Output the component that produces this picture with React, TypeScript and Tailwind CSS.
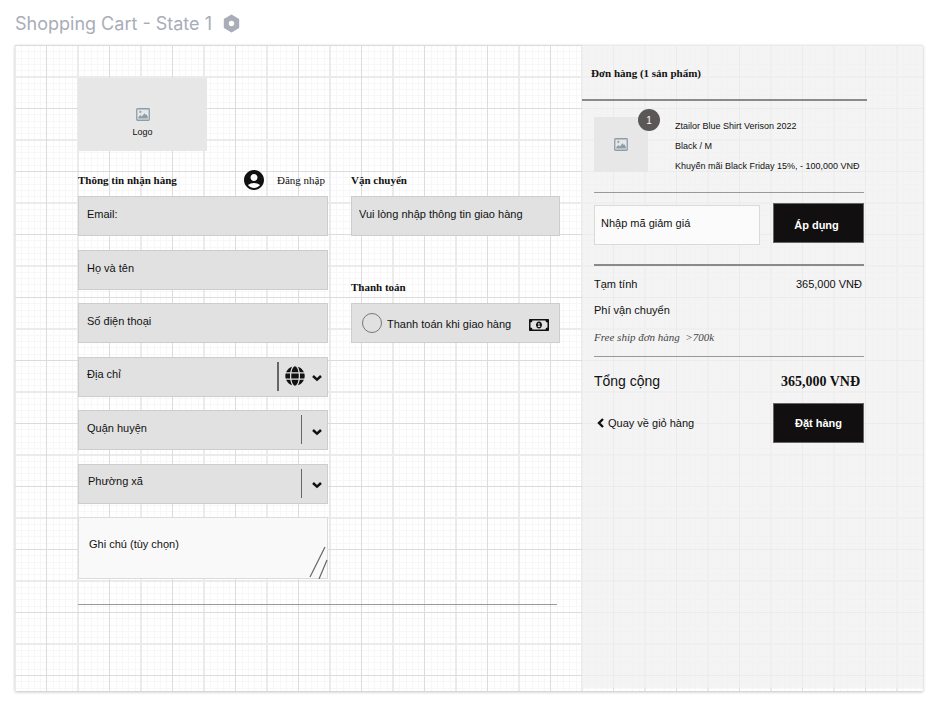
import React from "react";
import { FaGlobe, FaRegMoneyBillAlt } from "react-icons/fa";
import { MdAccountCircle } from "react-icons/md";

const SANS = "font-['Liberation_Sans',Arial,sans-serif]";
const SERIF = "font-['Liberation_Serif','Times_New_Roman',serif]";
const FIELD =
  "block h-10 w-full rounded-none border border-[#cdcdcd] bg-[#e1e1e1] pb-1 text-[11px] text-[#111] placeholder:text-[#111] placeholder:opacity-100 outline-none";

function GridPaper() {
  return (
    <svg className="absolute inset-0 h-full w-full" aria-hidden="true">
      <defs>
        <pattern id="grid" width="63" height="63" patternUnits="userSpaceOnUse" shapeRendering="crispEdges">
          <path
            d="M6 0h1v63h-1zM13 0h1v63h-1zM19 0h1v63h-1zM25 0h1v63h-1zM38 0h1v63h-1zM44 0h1v63h-1zM50 0h1v63h-1zM57 0h1v63h-1zM0 6h63v1h-63zM0 13h63v1h-63zM0 19h63v1h-63zM0 25h63v1h-63zM0 38h63v1h-63zM0 44h63v1h-63zM0 50h63v1h-63zM0 57h63v1h-63z"
            fill="#f7f7f7"
          />
          <path d="M0 0h1v63h-1zM62 0h1v63h-1zM0 31h63v2h-63z" fill="#ebebeb" />
          <path d="M31 0h1v63h-1zM0 0h63v1h-63z" fill="#dcdcdc" />
        </pattern>
      </defs>
      <rect width="100%" height="100%" fill="url(#grid)" />
    </svg>
  );
}

function ImageIcon() {
  return (
    <svg width="14" height="13" viewBox="0 0 14 13" aria-hidden="true">
      <rect x="0.75" y="0.75" width="12.5" height="11.5" rx="0.8" fill="none" stroke="#8d9da8" strokeWidth="1.3" />
      <path d="M2.3 10.6V9.200l2-2.200 1.500 1.500L8.600 5.200l1.200 1.700.6-.6 1.400 2.400v1.900z" fill="#8d9da8" />
      <path d="M4.300 2.700v2.400M3.100 3.900h2.400" stroke="#8d9da8" strokeWidth="0.9" />
    </svg>
  );
}

function ChevronDown() {
  return (
    <svg width="10" height="8" viewBox="0 0 10 8" fill="none" aria-hidden="true">
      <path d="M1 2l4 3.600L9 2" stroke="#111" strokeWidth="2.500" />
    </svg>
  );
}

function SelectField({ label, globe = false, indent = false }: { label: string; globe?: boolean; indent?: boolean }) {
  return (
    <div className="relative">
      <select
        aria-label={label}
        className={`${FIELD} appearance-none ${indent ? "pl-[9px]" : "pl-2"}`}
      >
        <option>{label}</option>
      </select>
      <div className="pointer-events-none absolute inset-y-0 right-[6px] flex items-center pb-px">
        <span className={`h-[29px] bg-[#666] ${globe ? "mr-[6px] w-[2px]" : "mr-[10px] w-px"}`} />
        {globe && <FaGlobe className="mr-[7px] text-[20px] text-[#111]" />}
        <span className="pt-1">
          <ChevronDown />
        </span>
      </div>
    </div>
  );
}

export default function App() {
  return (
    <div className={`min-h-screen bg-white pr-[13px] pb-[11px] pl-[15px] text-[11px] text-[#111] ${SANS}`}>
      <header className="flex h-[45px] items-center gap-[11px] pt-0.5 text-[#a8adb8]">
        <h1 className="font-['Inter',sans-serif] text-[18px] leading-6">Shopping Cart - State 1</h1>
        <svg width="17" height="19" viewBox="0 0 17 19" aria-hidden="true">
          <path
            d="M8.500 1.500l6.700 4v8l-6.700 4-6.700-4v-8z"
            fill="#a8adb8"
            stroke="#a8adb8"
            strokeWidth="2"
            strokeLinejoin="round"
          />
          <circle cx="8.500" cy="9.500" r="2.700" fill="#fff" />
        </svg>
      </header>

      <div className="relative grid min-h-[calc(100vh-56px)] grid-cols-[567fr_341fr] shadow-[0_1px_3px_rgba(0,0,0,0.25)]">
        <GridPaper />

        <main className="relative pt-[33px] pr-[22px] pl-[63px]">
          <div className="flex h-[73px] w-[129px] flex-col items-center justify-end bg-[#e7e7e7] pb-[13px] text-[9px]">
            <ImageIcon />
            <span className="mt-[5px] leading-3">Logo</span>
          </div>

          <div className="mt-[19px] grid grid-cols-[250fr_209fr] gap-x-[23px]">
            <section>
              <div className="flex h-[26px] items-center justify-between pr-[3px] pb-[6px]">
                <h2 className={`${SERIF} text-[11px] font-bold`}>Thông tin nhận hàng</h2>
                <a href="#login" className={`${SERIF} flex items-center gap-[11px] text-[11px]`}>
                  <MdAccountCircle className="text-[24px]" />
                  Đăng nhập
                </a>
              </div>
              <form className="flex h-[383px] flex-col justify-between">
                <input aria-label="Email" placeholder="Email:" className={`${FIELD} pl-2`} />
                <input aria-label="Họ và tên" placeholder="Họ và tên" className={`${FIELD} pl-2`} />
                <input aria-label="Số điện thoại" placeholder="Số điện thoại" className={`${FIELD} pl-2`} />
                <SelectField label="Địa chỉ" globe />
                <SelectField label="Quận huyện" />
                <SelectField label="Phường xã" indent />
                <div className="relative">
                  <textarea
                    aria-label="Ghi chú"
                    placeholder="Ghi chú (tùy chọn)"
                    className="block h-[62px] w-full resize-none rounded-none border border-[#dcdcdc] bg-[#f9f9f9] pt-4 pl-[10px] text-[11px] leading-5 outline-none placeholder:text-[#111] placeholder:opacity-100"
                  />
                  <svg
                    className="pointer-events-none absolute right-0 bottom-0"
                    width="20"
                    height="34"
                    viewBox="0 0 20 34"
                    aria-hidden="true"
                  >
                    <path d="M2 32L17 2M11 34l8-19" stroke="#666" strokeWidth="1.200" />
                  </svg>
                </div>
              </form>
            </section>

            <section>
              <h2 className={`${SERIF} flex h-[26px] items-center pb-[6px] text-[11px] font-bold`}>Vận chuyển</h2>
              <input
                aria-label="Vận chuyển"
                placeholder="Vui lòng nhập thông tin giao hàng"
                className={`${FIELD} pl-[7px]`}
              />
              <h2 className={`${SERIF} mt-[41px] flex h-[26px] items-center pb-[6px] text-[11px] font-bold`}>
                Thanh toán
              </h2>
              <label className="flex h-10 items-center border border-[#cdcdcd] bg-[#e1e1e1] px-[10px]">
                <input
                  type="radio"
                  name="payment"
                  className="mb-px size-5 shrink-0 appearance-none rounded-full border border-[#777] checked:bg-[#777]"
                />
                <span className="ml-[5px] whitespace-nowrap pt-0.5">Thanh toán khi giao hàng</span>
                <FaRegMoneyBillAlt className="mt-1 ml-auto text-[20px]" />
              </label>
            </section>
          </div>
          <hr className="mt-[25px] mr-[3px] border-[#999]" />
        </main>

        <aside className="relative mb-[3px] bg-[#f0f0f0]/75">
          <h2
            className={`${SERIF} mr-14 h-14 border-b-2 border-[#8a8a8a] pt-[18px] pl-[9px] text-[11px] leading-5 font-bold`}
          >
            Đơn hàng (1 sản phẩm)
          </h2>
          <div className="pr-[59px] pl-3">
            <div className="flex border-b border-[#999] pt-[15px] pb-4">
              <div className="relative mt-px flex h-[55px] w-[54px] shrink-0 items-center justify-center bg-[#e7e7e7]">
                <ImageIcon />
                <span className="absolute -top-2 -right-3 flex size-[22px] items-center justify-center rounded-full bg-[#5c5757] text-[10px] text-white">
                  1
                </span>
              </div>
              <div className="ml-[27px] text-[9px] leading-5 whitespace-nowrap">
                <p>Ztailor Blue Shirt Verison 2022</p>
                <p>Black / M</p>
                <p>Khuyến mãi Black Friday 15%, - 100,000 VNĐ</p>
              </div>
            </div>

            <div className="flex items-start gap-[13px] border-b-2 border-[#8a8a8a] pt-[10px] pb-[19px]">
              <input
                aria-label="Mã giảm giá"
                placeholder="Nhập mã giảm giá"
                className="mt-0.5 h-10 min-w-0 flex-1 rounded-none border border-[#dadada] bg-[#fbfbfb] pb-1 pl-[6px] text-[11px] outline-none placeholder:text-[#111] placeholder:opacity-100"
              />
              <button className="h-10 w-[91px] border border-[#666] bg-[#110f10] pt-1 pr-1 text-[11px] font-bold text-white">
                Áp dụng
              </button>
            </div>

            <div className="border-b border-[#999] pt-2 pb-[9px] leading-5">
              <div className="flex justify-between pr-0.5">
                <span>Tạm tính</span>
                <span>365,000 VNĐ</span>
              </div>
              <p className="mt-[6px]">Phí vận chuyển</p>
              <p className={`${SERIF} mt-[7px] whitespace-pre text-[11px] text-[#444] italic`}>
                {"Free ship đơn hàng  >700k"}
              </p>
            </div>

            <div className="flex items-center justify-between pt-3 pr-1 leading-6">
              <span className="text-[14px]">Tổng cộng</span>
              <span className={`${SERIF} pt-0.5 text-[14px] leading-[22px] font-bold`}>365,000 VNĐ</span>
            </div>
            <div className="mt-[10px] flex items-center justify-between">
              <a href="#cart" className="flex items-center gap-1 pl-[3px]">
                <svg width="7" height="10" viewBox="0 0 7 10" fill="none" aria-hidden="true">
                  <path d="M6 1L2 5l4 4" stroke="#111" strokeWidth="2.400" />
                </svg>
                Quay về giỏ hàng
              </a>
              <button className="h-10 w-[91px] border border-[#666] bg-[#110f10] text-[11px] font-bold text-white">
                Đặt hàng
              </button>
            </div>
          </div>
        </aside>
      </div>
    </div>
  );
}
